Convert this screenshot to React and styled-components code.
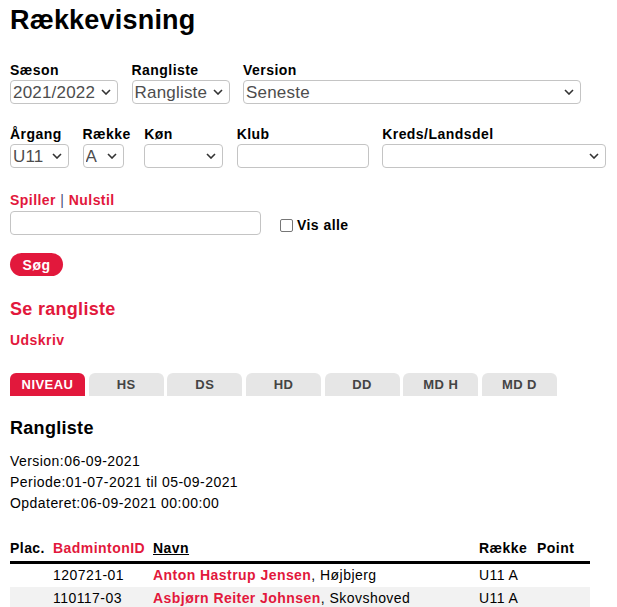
import React from "react";
import styled, {createGlobalStyle} from "styled-components";

const RED = "#e2183c";

const GlobalStyle = createGlobalStyle`
    body {
        margin: 0;
        font-family: "Liberation Sans", Arial, sans-serif;
        letter-spacing: 0.45px;
        color: #000;
        background: #fff;
    }
`;

const Page = styled.div`
    padding: 4px 10px 0 10px;
`;

const Title = styled.h1`
    font-size: 27px;
    font-weight: bold;
    letter-spacing: 0.2px;
    margin: 0 0 26px 0;
    line-height: 32px;
`;

const FilterRow = styled.div`
    display: flex;
    gap: 13.5px;
    margin-bottom: ${props => props.$mb || 0}px;
`;

const Field = styled.div`
    display: flex;
    flex-direction: column;
`;

const Label = styled.label`
    font-size: 14px;
    font-weight: bold;
    line-height: 17px;
    margin-bottom: 1px;
    white-space: nowrap;
`;

const SelectWrap = styled.div`
    position: relative;
    width: ${props => props.$w}px;
`;

const Select = styled.select`
    appearance: none;
    width: 100%;
    height: 24px;
    border: 1px solid #c4c4c4;
    border-radius: 4px;
    background: #fff;
    font-family: "Liberation Sans", Arial, sans-serif;
    font-size: 17px;
    letter-spacing: 0.2px;
    color: #4d4d4d;
    padding: 0 20px 0 2px;
    outline: none;
`;

const Chevron = styled.svg`
    position: absolute;
    right: 7px;
    top: 9px;
    pointer-events: none;
`;

const TextInput = styled.input`
    width: ${props => props.$w}px;
    height: 24px;
    box-sizing: border-box;
    border: 1px solid #c4c4c4;
    border-radius: 4px;
    padding: 0 4px;
    font-size: 14px;
    outline: none;
`;

const LinkRow = styled.div`
    font-size: 14px;
    font-weight: bold;
    line-height: 17px;
    margin-bottom: 2px;
    color: ${RED};
`;

const Sep = styled.span`
    color: #4a4f7a;
    font-weight: normal;
`;

const SearchRow = styled.div`
    display: flex;
    align-items: center;
    gap: 19px;
    margin-bottom: 18px;
`;

const CheckLabel = styled.label`
    display: flex;
    align-items: center;
    gap: 4px;
    font-size: 14px;
    font-weight: bold;
    margin-top: 4px;
`;

const CheckBox = styled.span`
    width: 11px;
    height: 11px;
    border: 1px solid #767676;
    border-radius: 2px;
    background: #fff;
`;

const SearchButton = styled.button`
    background: ${RED};
    color: #fff;
    border: none;
    border-radius: 12px;
    height: 23px;
    width: 53px;
    font-family: "Liberation Sans", Arial, sans-serif;
    font-size: 14px;
    letter-spacing: 0.45px;
    font-weight: bold;
    padding: 0;
    display: block;
    margin-bottom: 22px;
`;

const SubHeading = styled.div`
    color: ${props => props.$red ? RED : "#000"};
    font-size: ${props => props.$size}px;
    font-weight: bold;
    letter-spacing: ${props => props.$size > 14 ? 0.3 : 0.45}px;
    line-height: ${props => props.$lh}px;
    margin-bottom: ${props => props.$mb}px;
`;

const Tabs = styled.div`
    display: flex;
    gap: 3.67px;
    margin-bottom: 20px;
`;

const Tab = styled.div`
    width: 75px;
    height: 23px;
    display: flex;
    align-items: center;
    justify-content: center;
    border-radius: 6px 6px 0 0;
    background: ${props => props.$active ? RED : "#e6e6e6"};
    color: ${props => props.$active ? "#fff" : "#444"};
    font-size: 13px;
    font-weight: bold;
`;

const Info = styled.div`
    font-size: 14px;
    line-height: 21px;
    margin-bottom: 26px;
`;

const Table = styled.table`
    border-collapse: collapse;
    table-layout: fixed;
    width: 580px;
    font-size: 14px;
`;

const Col = styled.col`
    width: ${props => props.$w}px;
`;

const Th = styled.th`
    text-align: left;
    font-weight: bold;
    padding: 0 4px 4px 0;
    height: 17px;
    line-height: 17px;
    border-bottom: 3px solid #000;
    color: ${props => props.$red ? RED : "#000"};
    text-decoration: ${props => props.$underline ? "underline" : "none"};
    white-space: nowrap;
`;

const Tr = styled.tr`
    background: ${props => props.$alt ? "#f2f2f2" : "transparent"};
`;

const Td = styled.td`
    padding: 0 4px 0 0;
    height: 23px;
    line-height: 23px;
    white-space: nowrap;
    overflow: hidden;
`;

const PlayerName = styled.span`
    color: ${RED};
    font-weight: bold;
`;

function DropDown({width, value}) {
    return (
        <SelectWrap $w={width}>
            <Select defaultValue={value}>
                <option>{value}</option>
            </Select>
            <Chevron width="10" height="6" viewBox="0 0 10 6">
                <path d="M1 1 L5 5 L9 1" fill="none" stroke="#333" strokeWidth="1.6"/>
            </Chevron>
        </SelectWrap>
    );
}

const tabs = ["NIVEAU", "HS", "DS", "HD", "DD", "MD H", "MD D"];

const rows = [
    {id: "120721-01", name: "Anton Hastrup Jensen", club: "Højbjerg", row: "U11 A"},
    {id: "110117-03", name: "Asbjørn Reiter Johnsen", club: "Skovshoved", row: "U11 A"},
];

export default function App() {
    return (
        <Page>
            <GlobalStyle/>
            <Title>Rækkevisning</Title>
            <FilterRow $mb={22}>
                <Field>
                    <Label>Sæson</Label>
                    <DropDown width={108} value="2021/2022"/>
                </Field>
                <Field>
                    <Label>Rangliste</Label>
                    <DropDown width={98} value="Rangliste"/>
                </Field>
                <Field>
                    <Label>Version</Label>
                    <DropDown width={338} value="Seneste"/>
                </Field>
            </FilterRow>
            <FilterRow $mb={24}>
                <Field>
                    <Label>Årgang</Label>
                    <DropDown width={59} value="U11"/>
                </Field>
                <Field>
                    <Label>Række</Label>
                    <DropDown width={41} value="A"/>
                </Field>
                <Field>
                    <Label>Køn</Label>
                    <DropDown width={79} value=""/>
                </Field>
                <Field>
                    <Label>Klub</Label>
                    <TextInput $w={132}/>
                </Field>
                <Field>
                    <Label>Kreds/Landsdel</Label>
                    <DropDown width={224} value=""/>
                </Field>
            </FilterRow>
            <LinkRow>Spiller <Sep>|</Sep> Nulstil</LinkRow>
            <SearchRow>
                <TextInput $w={251}/>
                <CheckLabel><CheckBox/>Vis alle</CheckLabel>
            </SearchRow>
            <SearchButton>Søg</SearchButton>
            <SubHeading $red $size={18} $lh={22} $mb={12}>Se rangliste</SubHeading>
            <SubHeading $red $size={14} $lh={17} $mb={24}>Udskriv</SubHeading>
            <Tabs>
                {tabs.map((t, i) => <Tab key={t} $active={i === 0}>{t}</Tab>)}
            </Tabs>
            <SubHeading $size={18} $lh={24} $mb={11}>Rangliste</SubHeading>
            <Info>
                <div>Version:06-09-2021</div>
                <div>Periode:01-07-2021 til 05-09-2021</div>
                <div>Opdateret:06-09-2021 00:00:00</div>
            </Info>
            <Table>
                <colgroup>
                    <Col $w={43}/>
                    <Col $w={100}/>
                    <Col $w={326}/>
                    <Col $w={58}/>
                    <Col $w={53}/>
                </colgroup>
                <thead>
                <tr>
                    <Th>Plac.</Th>
                    <Th $red>BadmintonID</Th>
                    <Th $underline>Navn</Th>
                    <Th>Række</Th>
                    <Th>Point</Th>
                </tr>
                </thead>
                <tbody>
                {rows.map((r, i) => (
                    <Tr key={r.id} $alt={i % 2 === 1}>
                        <Td/>
                        <Td>{r.id}</Td>
                        <Td><PlayerName>{r.name}</PlayerName>, {r.club}</Td>
                        <Td>{r.row}</Td>
                        <Td/>
                    </Tr>
                ))}
                </tbody>
            </Table>
        </Page>
    );
}
